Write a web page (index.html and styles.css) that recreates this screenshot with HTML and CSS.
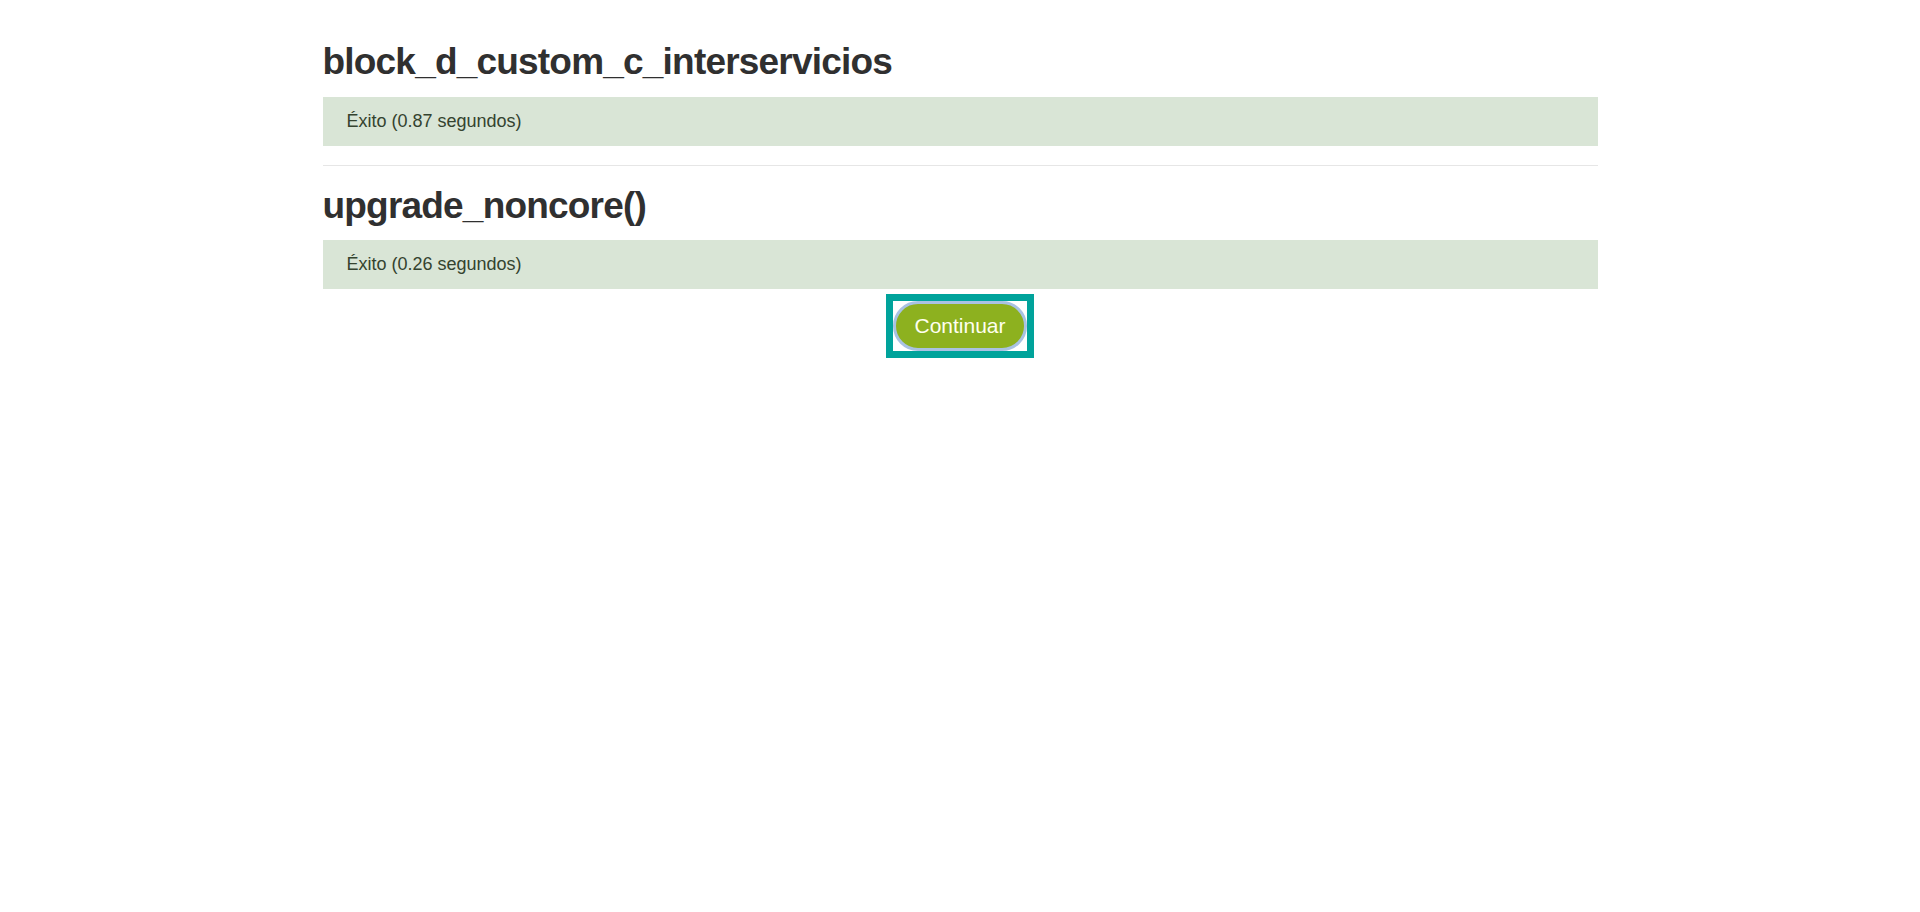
FILE: index.html
```html
<!DOCTYPE html>
<html lang="es">
<head>
<meta charset="utf-8">
<title>Actualización</title>
<link rel="stylesheet" href="styles.css">
</head>
<body>
<div class="page">
  <h2 class="step-title">block_d_custom_c_interservicios</h2>
  <div class="notice">Éxito (0.87 segundos)</div>
  <hr class="sep">
  <h2 class="step-title second">upgrade_noncore()</h2>
  <div class="notice">Éxito (0.26 segundos)</div>
  <div class="actions">
    <span class="focus-ring">
      <button class="btn-continue" type="button">Continuar</button>
    </span>
  </div>
</div>
</body>
</html>
```

FILE: styles.css
```css
html, body {
  margin: 0;
  padding: 0;
  background: #ffffff;
}

body {
  font-family: "Liberation Sans", Arial, sans-serif;
  color: #333333;
}

.page {
  width: 1275px;
  margin: 0 auto;
  padding-top: 40px;
}

.step-title {
  margin: 0 0 13px 0;
  font-size: 37px;
  letter-spacing: -0.8px;
  line-height: 44px;
  font-weight: bold;
  color: #303030;
}

.step-title.second {
  margin-top: 18px;
  margin-bottom: 12px;
}

.notice {
  background: #d9e5d6;
  color: #34432f;
  font-size: 18px;
  line-height: 25px;
  padding: 12px 24px;
}

.sep {
  margin: 19px 0 0 0;
  border: 0;
  border-top: 1px solid #e6e6e6;
  height: 0;
}

.actions {
  display: flex;
  justify-content: center;
  padding-top: 5px;
}

.focus-ring {
  display: inline-flex;
  border: 7px solid #00a39b;
  background: #ffffff;
}

.btn-continue {
  font-family: "Liberation Sans", Arial, sans-serif;
  font-size: 21px;
  color: #fffff0;
  background: #8db11f;
  border: 3px solid #a9c2e2;
  border-radius: 25px;
  width: 134px;
  height: 50px;
  padding: 0;
  outline: none;
  cursor: pointer;
}
```
